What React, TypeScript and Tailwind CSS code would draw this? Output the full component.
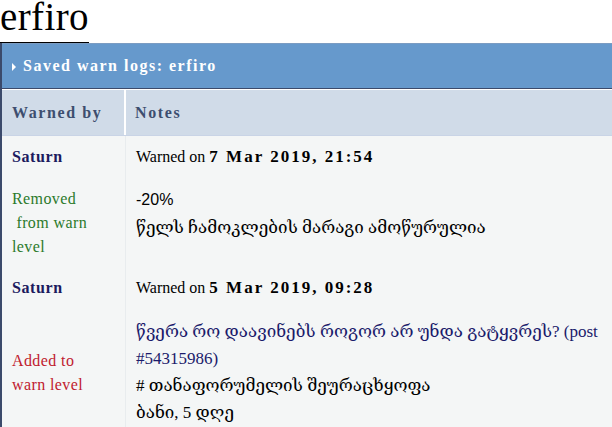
import React from "react";

const serif = "font-['Liberation_Serif','DejaVu_Serif','DejaVu_Sans',serif]";

function Row({ left, right, leftClass = "", rightClass = "" }: { left: React.ReactNode; right: React.ReactNode; leftClass?: string; rightClass?: string }) {
  return (
    <div className="grid grid-cols-[124px_1fr]">
      <div className={`flex items-center border-r border-[#e8ecee] pl-[10px] pr-2 ${leftClass}`}>{left}</div>
      <div className={`flex items-center pl-[10px] pr-1 ${rightClass}`}>{right}</div>
    </div>
  );
}

export default function App() {
  return (
    <div className={`w-[612px] h-[427px] overflow-hidden bg-white ${serif}`}>
      <div className="h-[43px]">
        <h1 className="inline-block border-b border-black text-[39px] leading-[34px] pb-[8px] tracking-[0.4px] text-black">erfiro</h1>
      </div>
      <div className="border-l-2 border-[#3b4a6b]">
        <div className="h-[45px] bg-[#6699cc] border-t border-[#7b9cc2] flex items-center pl-[10px] gap-[7px]">
          <svg width="4" height="8" viewBox="0 0 4 8" className="mt-[1px]"><polygon points="0,0 4,4 0,8" fill="#ffffff" /></svg>
          <span className="text-white font-bold text-[16px] tracking-[1.5px]">Saved warn logs: erfiro</span>
        </div>
        <div className="h-[1px] bg-[#3b4a6b]" />
        <div className="h-[1px] bg-white" />
        <div className="grid grid-cols-[124px_1fr] h-[46px] bg-[#d0dbe8] border-b border-[#c9d4e6]">
          <div className="flex items-center pl-[10px] border-r-2 border-white font-bold text-[16px] tracking-[1.6px] text-[#3d4e6f]">Warned by</div>
          <div className="flex items-center pl-[9px] font-bold text-[16px] tracking-[1.6px] text-[#3d4e6f]">Notes</div>
        </div>
        <div className="bg-[#f4f6f6]">
          <Row
            leftClass="h-[42px]"
            left={<span className="font-bold text-[16px] tracking-[0.6px] text-[#1b1b5e]">Saturn</span>}
            right={<span className="text-[16px] text-black">Warned on <b className="text-[17px] tracking-[2px]">7 Mar 2019, 21:54</b></span>}
          />
          <Row
            leftClass="h-[90px]"
            left={<span className="text-[16px] leading-[24px] tracking-[0.4px] text-[#2b7a2b]">Removed<br />&nbsp;from warn<br />level</span>}
            rightClass="items-start pt-[10px]"
            right={
              <div className="flex flex-col text-black">
                <span className="text-[16px] leading-[24px] font-['Liberation_Sans',sans-serif]">-20%</span>
                <span className="text-[17px] leading-[24px] mt-[4px]">წელს ჩამოკლების მარაგი ამოწურულია</span>
              </div>
            }
          />
          <Row
            leftClass="h-[40px]"
            left={<span className="font-bold text-[16px] tracking-[0.6px] text-[#1b1b5e]">Saturn</span>}
            right={<span className="text-[16px] text-black">Warned on <b className="text-[17px] tracking-[2px]">5 Mar 2019, 09:28</b></span>}
          />
          <Row
            leftClass="h-[130px]"
            left={<span className="text-[16px] leading-[24px] tracking-[0.4px] text-[#c0202e]">Added to<br />warn level</span>}
            rightClass="items-start pt-[10px]"
            right={
              <div className="flex flex-col text-[17px] leading-[27px] text-black">
                <span className="text-[#1b1b6b]">წვერა რო დაავინებს როგორ არ უნდა გატყვრეს? (post #54315986)</span>
                <span># თანაფორუმელის შეურაცხყოფა</span>
                <span>ბანი, 5 დღე</span>
              </div>
            }
          />
        </div>
      </div>
    </div>
  );
}
